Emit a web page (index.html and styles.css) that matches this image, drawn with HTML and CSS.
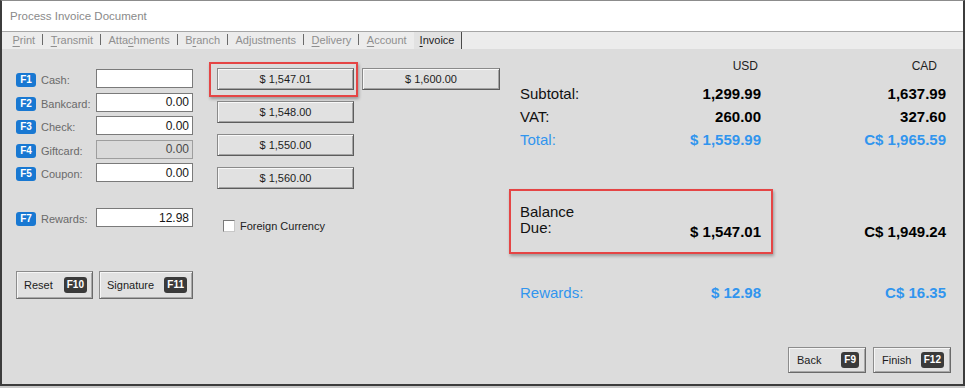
FILE: index.html
```html
<!DOCTYPE html>
<html lang="en">
<head>
    <meta charset="UTF-8">
    <title>Process Invoice Document</title>
    <link rel="stylesheet" href="styles.css">
</head>
<body>
    <div class="window">
        <div class="titlebar">Process Invoice Document</div>

        <div class="tabs">
            <span class="tab"><u>P</u>rint</span><span class="sep"></span>
            <span class="tab"><u>T</u>ransmit</span><span class="sep"></span>
            <span class="tab">Atta<u>c</u>hments</span><span class="sep"></span>
            <span class="tab">B<u>r</u>anch</span><span class="sep"></span>
            <span class="tab">Adjustments</span><span class="sep"></span>
            <span class="tab"><u>D</u>elivery</span><span class="sep"></span>
            <span class="tab"><u>A</u>ccount</span>
            <span class="tab active"><u>I</u>nvoice</span>
        </div>

        <div class="content">
            <div class="main">
                <div class="tenders">
                    <div class="tender-list">
                        <div class="tender"><span class="key">F1</span><label>Cash:</label><input class="amount" type="text" value=""></div>
                        <div class="tender"><span class="key">F2</span><label>Bankcard:</label><input class="amount" type="text" value="0.00"></div>
                        <div class="tender"><span class="key">F3</span><label>Check:</label><input class="amount" type="text" value="0.00"></div>
                        <div class="tender"><span class="key">F4</span><label>Giftcard:</label><input class="amount" type="text" value="0.00" disabled></div>
                        <div class="tender"><span class="key">F5</span><label>Coupon:</label><input class="amount" type="text" value="0.00"></div>
                    </div>
                    <div class="tender rewards"><span class="key">F7</span><label>Rewards:</label><input class="amount" type="text" value="12.98"></div>

                    <div class="actions">
                        <button class="btn reset">Reset <span class="hotkey">F10</span></button>
                        <button class="btn signature">Signature <span class="hotkey">F11</span></button>
                    </div>
                </div>

                <div class="quick">
                    <div class="quick-grid">
                        <button class="amt marked">$ 1,547.01</button>
                        <button class="amt">$ 1,600.00</button>
                        <button class="amt first-col">$ 1,548.00</button>
                        <button class="amt first-col">$ 1,550.00</button>
                        <button class="amt first-col">$ 1,560.00</button>
                    </div>
                    <label class="check"><span class="box"></span>Foreign Currency</label>
                </div>

                <div class="summary">
                    <div class="sum-head">
                        <span class="sum-label"></span>
                        <span class="sum-usd">USD</span>
                        <span class="sum-cad">CAD</span>
                    </div>
                    <div class="sum-row first">
                        <span class="sum-label">Subtotal:</span>
                        <span class="sum-usd">1,299.99</span>
                        <span class="sum-cad">1,637.99</span>
                    </div>
                    <div class="sum-row">
                        <span class="sum-label">VAT:</span>
                        <span class="sum-usd">260.00</span>
                        <span class="sum-cad">327.60</span>
                    </div>
                    <div class="sum-row blue">
                        <span class="sum-label">Total:</span>
                        <span class="sum-usd">$ 1,559.99</span>
                        <span class="sum-cad">C$ 1,965.59</span>
                    </div>
                    <div class="sum-row balance">
                        <span class="sum-label">Balance<br>Due:</span>
                        <span class="sum-usd">$ 1,547.01</span>
                        <span class="sum-cad">C$ 1,949.24</span>
                    </div>
                    <div class="sum-row blue rewards-row">
                        <span class="sum-label">Rewards:</span>
                        <span class="sum-usd">$ 12.98</span>
                        <span class="sum-cad">C$ 16.35</span>
                    </div>
                </div>
            </div>

            <div class="footer">
                <button class="btn nav">Back <span class="hotkey">F9</span></button>
                <button class="btn nav">Finish <span class="hotkey">F12</span></button>
            </div>
        </div>
    </div>
</body>
</html>
```

FILE: styles.css
```css
* { box-sizing: border-box; }
body { margin: 0; background: #c9c9c9; font-family: "Liberation Sans", Arial, sans-serif; }

.window { width: 965px; height: 386px; background: #dcdcdc; border: 2px solid #3c3c3c; border-top: 1px solid #8c8c8c; display: flex; flex-direction: column; }

.titlebar { height: 31px; line-height: 30px; background: #fff; color: #8a8a8a; font-size: 11.5px; padding-left: 8px; border-bottom: 1px solid #a6a6a6; }

.tabs { height: 17px; background: #ececec; display: flex; align-items: stretch; padding-left: 3px; font-size: 11px; color: #8f8f8f; }
.tab { padding: 0 7px 0 7.5px; line-height: 17px; }
.tab u { text-decoration-thickness: 1px; text-underline-offset: 2px; }
.tab.active { background: #e2e2e2; color: #1e1e1e; padding: 0 7px 0 6px; border-right: 1px solid #4a4a4a; }
.sep { width: 1px; height: 11px; background: #6a6a6a; align-self: center; margin-top: -2px; }

.content { flex: 1; display: flex; flex-direction: column; }
.main { height: 298px; display: flex; padding-left: 14px; }

/* left: tenders */
.tenders { width: 177px; padding-top: 20px; }
.tender-list { display: flex; flex-direction: column; gap: 4.5px; }
.tender { display: flex; align-items: center; height: 19px; }
.key { width: 20px; height: 14px; margin-top: 3px; border-radius: 3px; background: #1878d2; color: #fff; font-size: 10px; font-weight: bold; line-height: 14px; text-align: center; }
.tender label { width: 55px; margin-left: 5px; margin-top: 3px; font-size: 11px; color: #6a6a6a; }
.amount { width: 97px; height: 19px; border: 1px solid #7a7a7a; background: #fff; padding: 0 3px; text-align: right; font: 12px "Liberation Sans", Arial, sans-serif; color: #151515; }
.amount:disabled { background: #dadada; border-color: #9e9e9e; color: #4a4a4a; }
.rewards { margin-top: 26px; }

.actions { display: flex; gap: 6px; margin-top: 44px; }
.btn { height: 28px; display: flex; align-items: center; justify-content: space-between; padding: 0 5px 0 7px; background: #e1e1e1; border: 1px solid #8c8c8c; border-right-color: #6a6a6a; border-bottom-color: #6a6a6a; box-shadow: inset 1px 1px 0 #f6f6f6, inset -1px -1px 0 #a8a8a8; font: 11px "Liberation Sans", Arial, sans-serif; color: #1c1c1c; }
.reset { width: 77px; }
.signature { width: 94px; }
.hotkey { height: 16px; line-height: 16px; padding: 0 3px; border-radius: 3px; background: #3a3a3a; color: #fff; font-size: 10px; font-weight: bold; }

/* middle: quick amounts */
.quick { margin-left: 24px; padding-top: 19px; }
.quick-grid { display: grid; grid-template-columns: 137px 138px; grid-auto-rows: 22px; column-gap: 8px; row-gap: 11px; }
.amt { background: #e1e1e1; border: 1px solid #8a8a8a; border-right-color: #5c5c5c; border-bottom-color: #5c5c5c; box-shadow: inset 1px 1px 0 #f8f8f8, inset -1px -1px 0 #a4a4a4; font: 11px "Liberation Sans", Arial, sans-serif; color: #1c1c1c; }
.first-col { grid-column: 1; }
.marked { position: relative; }
.marked::after { content: ""; position: absolute; left: -9px; top: -7px; right: -5px; bottom: -8px; border: 2px solid #e54545; box-shadow: 1px 2px 3px rgba(0, 0, 0, 0.3); }

.check { display: flex; align-items: center; gap: 5px; margin: 31px 0 0 6px; font-size: 11px; color: #222; }
.box { width: 12px; height: 12px; background: #fff; border: 1px solid #7a7a7a; border-right-color: #c8c8c8; border-bottom-color: #c8c8c8; }

/* right: summary */
.summary { width: 426px; margin-left: 20px; padding-top: 10px; color: #111; }
.sum-head, .sum-row { display: flex; }
.sum-label { flex: 1; }
.sum-usd { width: 101px; text-align: right; }
.sum-cad { width: 185px; text-align: right; }
.sum-head { height: 14px; line-height: 14px; font-size: 12px; color: #222; }
.sum-head .sum-usd { padding-right: 3px; }
.sum-head .sum-cad { padding-right: 9px; }
.sum-row { height: 23px; line-height: 23px; font-size: 15px; }
.sum-row .sum-usd, .sum-row .sum-cad { font-weight: bold; color: #000; }
.sum-row.first { margin-top: 9px; }
.blue, .blue .sum-usd, .blue .sum-cad { color: #3195ee !important; }

.balance { height: auto; line-height: 16px; margin-top: 52.5px; position: relative; }
.balance .sum-usd, .balance .sum-cad { padding-top: 20px; }
.balance::after { content: ""; position: absolute; left: -11px; top: -15px; width: 260px; height: 61px; border: 2px solid #e54545; box-shadow: 1px 2px 3px rgba(0, 0, 0, 0.3); }
.rewards-row { margin-top: 41.5px; }

.footer { display: flex; justify-content: flex-end; gap: 7px; padding-right: 12px; }
.nav { width: 78px; height: 26px; padding: 0 6px 0 8px; }
```
